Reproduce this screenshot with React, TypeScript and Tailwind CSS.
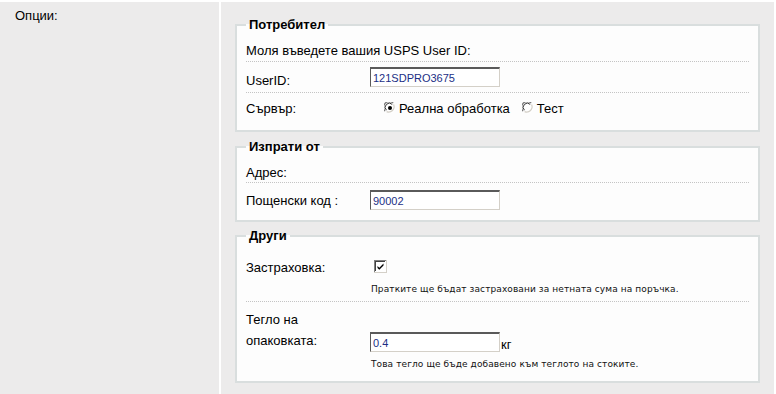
import React from "react";

function Radio({ checked }: { checked: boolean }) {
  return (
    <svg width="12" height="12" viewBox="0 0 12 12" className="shrink-0">
      <circle cx="6" cy="6" r="5.5" fill="#ffffff" />
      <path d="M1.2 9.2 A5.3 5.3 0 0 1 9.2 1.2" fill="none" stroke="#7a7a7a" strokeWidth="1.2" />
      <path d="M2.4 8.2 A4.1 4.1 0 0 1 8.2 2.4" fill="none" stroke="#333333" strokeWidth="1" />
      <path d="M9.6 2.6 A5.3 5.3 0 0 1 2.6 9.6" fill="none" stroke="#d4d0c8" strokeWidth="1.2" />
      {checked && <circle cx="6" cy="6" r="2" fill="#000000" />}
    </svg>
  );
}

function Checkbox() {
  return (
    <svg width="13" height="13" viewBox="0 0 13 13" className="shrink-0">
      <rect x="0" y="0" width="13" height="13" fill="#d4d0c8" />
      <rect x="0" y="0" width="12" height="12" fill="#808080" />
      <rect x="1" y="1" width="11" height="11" fill="#ffffff" />
      <rect x="1" y="1" width="10" height="10" fill="#404040" />
      <rect x="2" y="2" width="9" height="9" fill="#ffffff" />
      <path d="M3.5 6 L5.3 7.8 L9.5 3.6 L9.5 5.6 L5.3 9.8 L3.5 8 Z" fill="#000000" />
    </svg>
  );
}

function TextBox({ value }: { value: string }) {
  return (
    <input
      readOnly
      value={value}
      className="w-[130px] h-[20px] bg-white border border-t-2 border-t-[#5a5a5a] border-l-[#5a5a5a] border-b-[#d4d0c8] border-r-[#d4d0c8] pl-[2px] text-[11px] text-[#1c2f85] outline-none font-['Liberation_Sans',Arial,sans-serif]"
    />
  );
}

const fs = "w-[525px] min-w-0 border-2 border-[#d9dede] bg-[#fdfdfd] px-[9px] pb-0";
const lg = "px-[3px] font-bold leading-[15px] text-[13px]";
const small = "font-['DejaVu_Sans',Verdana,sans-serif] text-[9px] leading-[11px] tracking-[0.1px] text-[#111]";
const dotted = "border-b border-dotted border-[#c4c4c4]";

export default function App() {
  return (
    <div className="w-[776px] h-[394px] bg-white pt-[2px] flex font-['Liberation_Sans',Arial,sans-serif] text-[13px] leading-[15px] text-black">
      <div className="w-[219px] h-full bg-[#ecebeb] pl-[15px] pt-[6px]">Опции:</div>
      <div className="ml-[2px] w-[553px] h-full bg-[#ecebeb] pl-[14px] pt-[15px]">
        <fieldset className={fs}>
          <legend className={lg}>Потребител</legend>
          <div className={`h-[30px] ${dotted}`}>
            <div className="pt-[11px]">Моля въведете вашия USPS User ID:</div>
          </div>
          <div className={`h-[31px] flex ${dotted}`}>
            <div className="w-[124px] pt-[11px]">UserID:</div>
            <div className="pt-[5px]">
              <TextBox value="121SDPRO3675" />
            </div>
          </div>
          <div className="h-[37px] flex">
            <div className="w-[124px] pt-[8px]">Сървър:</div>
            <div className="pt-[8px] pl-[14px] flex items-start">
              <div className="mt-[1px]"><Radio checked /></div>
              <span className="ml-[3px]">Реална обработка</span>
              <div className="ml-[12px] mt-[1px]"><Radio checked={false} /></div>
              <span className="ml-[3px]">Тест</span>
            </div>
          </div>
        </fieldset>

        <fieldset className={`${fs} mt-[7px]`}>
          <legend className={lg}>Изпрати от</legend>
          <div className={`h-[29px] ${dotted}`}>
            <div className="pt-[11px]">Адрес:</div>
          </div>
          <div className="h-[37px] flex">
            <div className="w-[124px] pt-[10px]">Пощенски код :</div>
            <div className="pt-[7px]">
              <TextBox value="90002" />
            </div>
          </div>
        </fieldset>

        <fieldset className={`${fs} mt-[6px]`}>
          <legend className={lg}>Други</legend>
          <div className={`h-[59px] flex ${dotted}`}>
            <div className="w-[124px] pt-[17px]">Застраховка:</div>
            <div className="flex flex-col">
              <div className="mt-[17px] ml-[4px]"><Checkbox /></div>
              <div className={`${small} mt-[11px] ml-[1px]`}>
                Пратките ще бъдат застраховани за нетната сума на поръчка.
              </div>
            </div>
          </div>
          <div className="h-[79px] flex">
            <div className="w-[124px] pt-[7px] leading-[21px]">Тегло на опаковката:</div>
            <div className="flex flex-col">
              <div className="mt-[30px] flex items-end">
                <TextBox value="0.4" />
                <span className="ml-[1px]">кг</span>
              </div>
              <div className={`${small} mt-[7px] ml-[1px]`}>
                Това тегло ще бъде добавено към теглото на стоките.
              </div>
            </div>
          </div>
        </fieldset>
      </div>
    </div>
  );
}
